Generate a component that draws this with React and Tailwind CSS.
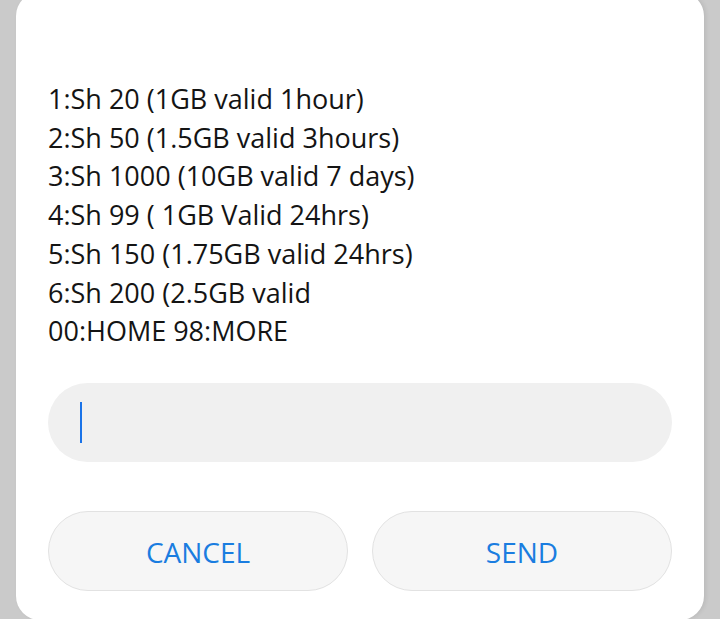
import React from "react";

const lines = [
  "1:Sh 20 (1GB valid 1hour)",
  "2:Sh 50 (1.5GB valid 3hours)",
  "3:Sh 1000 (10GB valid 7 days)",
  "4:Sh 99 ( 1GB Valid 24hrs)",
  "5:Sh 150 (1.75GB valid 24hrs)",
  "6:Sh 200 (2.5GB valid",
  "00:HOME 98:MORE",
];

export default function App() {
  return (
    <div
      className="w-[720px] h-[619px] overflow-hidden bg-[#cacaca]"
      style={{ fontFamily: '"Open Sans", "Noto Sans", sans-serif' }}
    >
      <div className="mx-4 -mt-2 h-[628px] rounded-[24px] bg-white px-8 pt-[88px] shadow-[2px_0_4px_rgba(0,0,0,0.08)]">
        <div className="text-[27px] leading-[38.7px] text-[#141414]">
          {lines.map((l) => (
            <div key={l} className="whitespace-pre">{l}</div>
          ))}
        </div>
        <div className="mt-[32px] h-[79px] rounded-full bg-[#f0f0f0] flex items-center pl-8">
          <div className="w-[2px] h-[41px] bg-[#1a73e8]" />
        </div>
        <div className="mt-[49px] flex gap-6">
          <button className="flex-1 h-[80px] rounded-full border border-[#e2e2e2] bg-[#f6f6f6] pt-[3px] text-[28px] text-[#1a7de0]">
            CANCEL
          </button>
          <button className="flex-1 h-[80px] rounded-full border border-[#e2e2e2] bg-[#f6f6f6] pt-[3px] text-[28px] text-[#1a7de0]">
            SEND
          </button>
        </div>
      </div>
    </div>
  );
}
